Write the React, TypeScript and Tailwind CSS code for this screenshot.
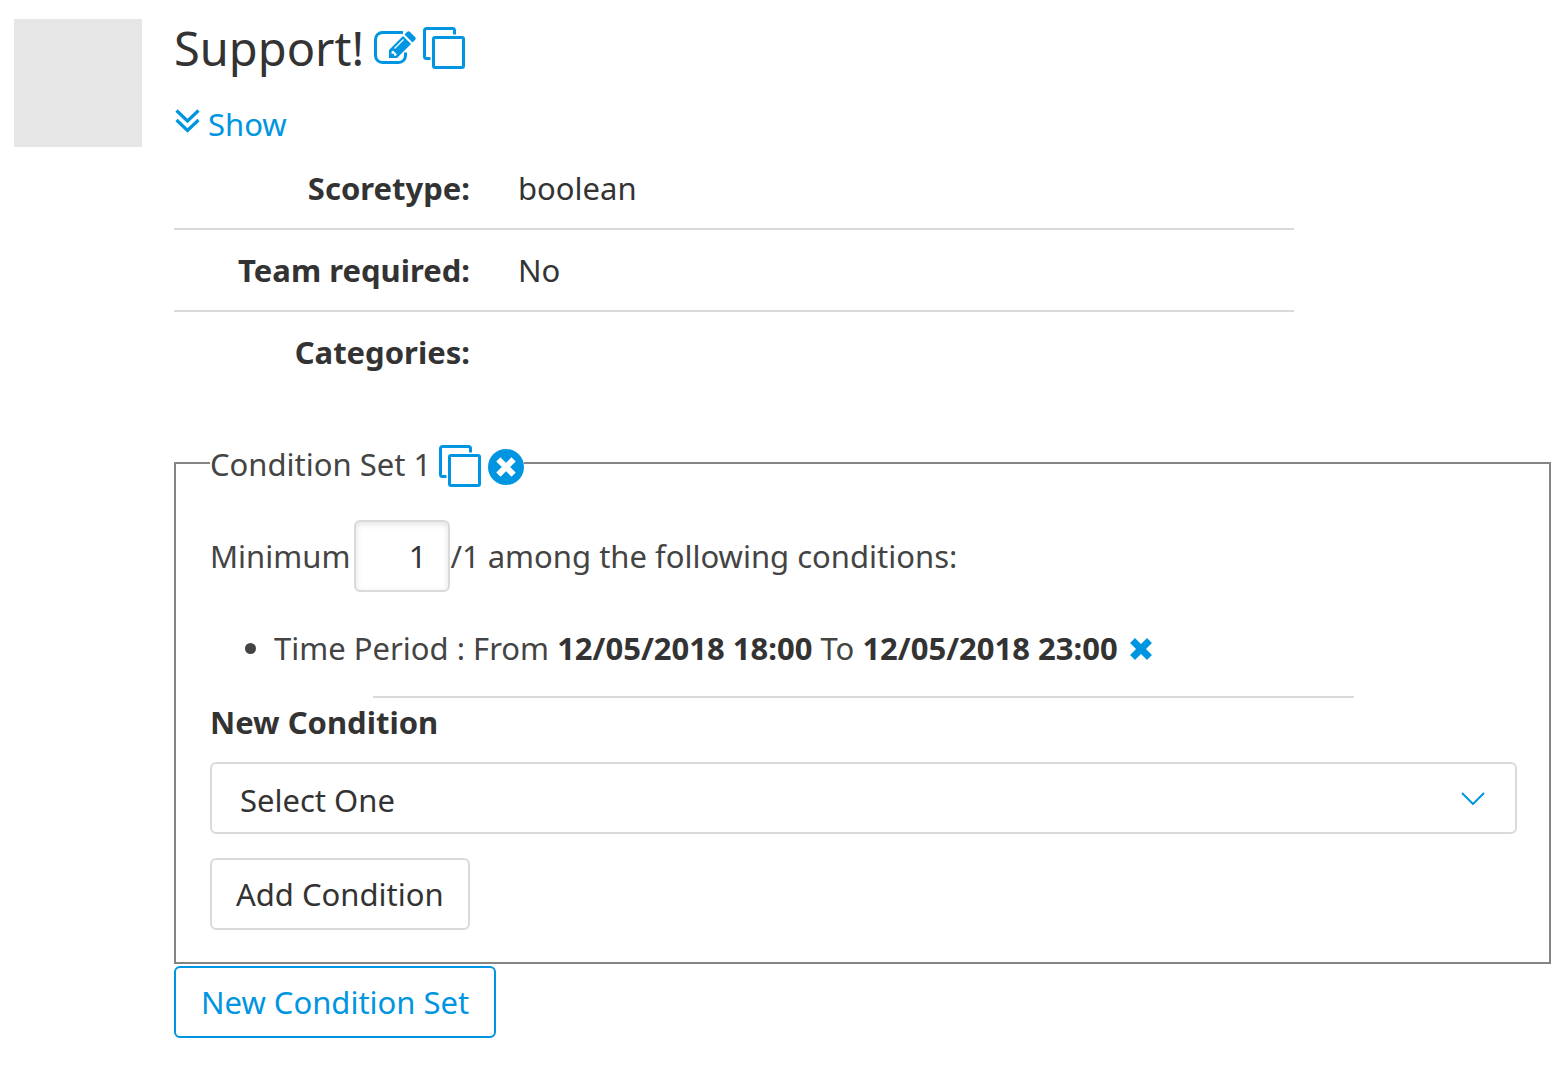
import React from 'react';

function EditIcon() {
  return (
    <svg viewBox="0 0 42 36" className="h-9 w-[42px]" aria-hidden="true">
      <path
        d="M29 2.5H8.5a7 7 0 0 0-7 7v16a7 7 0 0 0 7 7h16a7 7 0 0 0 7-7v-3"
        fill="none"
        stroke="currentColor"
        strokeWidth="3"
      />
      <path fill="currentColor" d="M15 28v-8L29 6l8 8-14 14z" />
      <path fill="white" d="M17.500 21.800 19 20.500l4 4-1.300 1.300h-1.700v-2h-2.500z" />
      <path d="m20.500 18.500 9-9" stroke="white" strokeWidth="1.200" />
      <path fill="currentColor" d="M30.500 4.500 33 2q1.500-1.500 3 0l5 5q1.500 1.500 0 3l-2.500 2.500z" />
    </svg>
  );
}

function CopyIcon() {
  return (
    <svg
      viewBox="0 0 42 42"
      className="size-[42px]"
      fill="none"
      stroke="currentColor"
      strokeWidth="3"
      aria-hidden="true"
    >
      <path d="M31.500 7.500V3.500a2 2 0 0 0-2-2H3.500a2 2 0 0 0-2 2v26a2 2 0 0 0 2 2h4" />
      <rect x="10.500" y="10.500" width="30" height="30" rx="1.500" />
    </svg>
  );
}

function RemoveSetIcon() {
  return (
    <svg viewBox="0 0 36 36" className="size-9" aria-hidden="true">
      <circle cx="18" cy="18" r="18" fill="currentColor" />
      <path d="m12.500 12.500 11 11m0-11-11 11" stroke="white" strokeWidth="6" strokeLinecap="square" />
    </svg>
  );
}

function CrossIcon() {
  return (
    <svg viewBox="0 0 22 22" className="size-[22px]" aria-hidden="true">
      <path d="m5 5 12 12M17 5 5 17" stroke="currentColor" strokeWidth="7" strokeLinecap="square" />
    </svg>
  );
}

function ShowIcon() {
  return (
    <svg
      viewBox="0 0 26 24"
      className="h-6 w-[26px]"
      fill="none"
      stroke="currentColor"
      strokeWidth="3.200"
      aria-hidden="true"
    >
      <path d="m2.500 1.500 11 10.500L24.500 1.500M2.500 11l11 10.500L24.500 11" />
    </svg>
  );
}

const details = [
  { label: 'Scoretype:', value: 'boolean' },
  { label: 'Team required:', value: 'No' },
  { label: 'Categories:', value: '' },
];

export default function App() {
  return (
    <main className="flex items-start gap-8 bg-white pt-[19px] pr-[9px] pl-3.5 font-['Noto_Sans','Open_Sans',sans-serif] text-[31px] leading-[48px] text-[#333333]">
      <div className="size-32 shrink-0 bg-[#e6e6e6]" />
      <div className="min-w-0 flex-1">
        <header className="flex h-[58px] items-center">
          <h1 className="mr-2.5 text-[47px] leading-[56px]">Support!</h1>
          <button type="button" aria-label="Edit" className="mr-[7px] text-[#0095e1]">
            <EditIcon />
          </button>
          <button type="button" aria-label="Duplicate" className="text-[#0095e1]">
            <CopyIcon />
          </button>
        </header>

        <a href="#details" className="mt-[23px] flex w-fit items-center gap-2 text-[#0095e1]">
          <span className="pb-1.5">
            <ShowIcon />
          </span>
          Show
        </a>

        <dl id="details" className="max-w-[1120px]">
          {details.map((d) => (
            <div
              key={d.label}
              className="flex h-[82px] items-center gap-12 border-b-2 border-[#dadada] last:border-transparent"
            >
              <dt className="w-[296px] text-right font-bold">{d.label}</dt>
              <dd>{d.value}</dd>
            </div>
          ))}
        </dl>

        <fieldset className="mt-[45px] min-w-0 border-2 border-[#848484] pr-8 pb-8 pl-[34px] text-[#444444]">
          <legend>
            <span className="flex h-12 items-end">
              <span className="mr-2 leading-[46px]">Condition Set 1</span>
              <button type="button" aria-label="Duplicate condition set" className="mr-[7px] text-[#0095e1]">
                <CopyIcon />
              </button>
              <button type="button" aria-label="Delete condition set" className="mb-0.5 text-[#0095e1]">
                <RemoveSetIcon />
              </button>
            </span>
          </legend>

          <div className="mt-[33px] flex items-center">
            <label htmlFor="minimum" className="mr-1">
              Minimum
            </label>
            <input
              id="minimum"
              type="text"
              inputMode="numeric"
              defaultValue="1"
              className="h-[72px] w-24 rounded-md border-2 border-[#dadada] pr-[22px] text-right text-[#333333] shadow-[inset_0_2px_6px_rgba(0,0,0,0.12)]"
            />
            <span>/1 among the following conditions:</span>
          </div>

          <ul className="mt-8 list-disc pl-16">
            <li>
              Time Period : From <strong className="text-[#333333]">12/05/2018 18:00</strong> To{' '}
              <strong className="text-[#333333]">12/05/2018 23:00</strong>
              <button type="button" aria-label="Remove condition" className="ml-3 text-[#0095e1]">
                <CrossIcon />
              </button>
            </li>
          </ul>

          <hr className="mx-auto mt-6 w-3/4 border-t-2 border-[#dadada]" />

          <label htmlFor="condition" className="block font-bold text-[#333333]">
            New Condition
          </label>
          <div className="mt-4 grid items-center">
            <select
              id="condition"
              className="col-start-1 row-start-1 h-[72px] w-full appearance-none rounded-md border-2 border-[#dadada] bg-white px-7 pt-1 text-[#333333]"
            >
              <option>Select One</option>
            </select>
            <svg
              viewBox="0 0 24 14"
              className="pointer-events-none col-start-1 row-start-1 mr-8 h-3.5 w-6 justify-self-end text-[#0095e1]"
              fill="none"
              stroke="currentColor"
              strokeWidth="2"
              aria-hidden="true"
            >
              <path d="m1 2 11 11L23 2" />
            </svg>
          </div>
          <button
            type="button"
            className="mt-6 block h-[72px] rounded-md border-2 border-[#dadada] px-6 text-[#333333]"
          >
            Add Condition
          </button>
        </fieldset>

        <button
          type="button"
          className="mt-0.5 block h-[72px] rounded-md border-2 border-[#0095e1] px-[25px] text-[#0095e1]"
        >
          New Condition Set
        </button>
      </div>
    </main>
  );
}
